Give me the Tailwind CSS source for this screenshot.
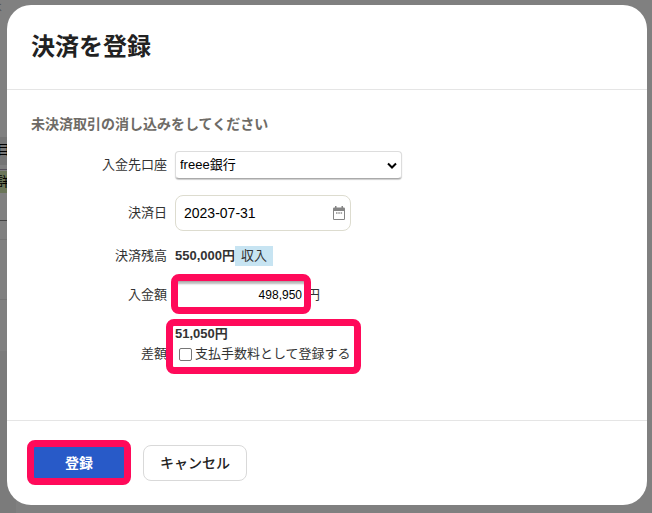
<!DOCTYPE html>
<html lang="ja">
<head>
  <meta charset="UTF-8" />
  <meta name="viewport" content="width=device-width, initial-scale=1.0"/>
  <title>決済を登録</title>
  <script src="https://cdn.jsdelivr.net/npm/@tailwindcss/browser@4"></script>
</head>
<body class="relative min-h-screen overflow-hidden bg-[#808080] font-['Liberation_Sans','Noto_Sans_CJK_JP',sans-serif] text-[13px] text-[#333333]">

  <!-- Page behind the dialog -->
  <div class="absolute inset-y-0 left-0 w-4 overflow-hidden" aria-hidden="true">
    <div class="absolute inset-x-0 top-[137px] h-7 bg-[#757575]"></div>
    <div class="absolute inset-x-0 top-[169px] h-px bg-[#55505a]"></div>
    <div class="absolute inset-x-0 top-[171px] h-[22px] bg-[#6a7558]"></div>
    <div class="absolute inset-x-0 top-[220px] h-px bg-[#444444]"></div>
    <div class="absolute inset-x-0 top-[239px] h-px bg-[#757575]"></div>
    <div class="absolute inset-x-0 top-[299px] h-px bg-[#757575]"></div>
    <div class="absolute inset-x-0 top-[351px] bottom-0 bg-[#7b7b7b]"></div>
    <span class="absolute -left-[10px] top-0 text-xs leading-4 text-[#555555]">は</span>
    <span class="absolute -left-[3px] top-[142px] leading-4 text-black">目</span>
    <span class="absolute -left-[3px] top-[174px] leading-4 text-black">詳</span>
  </div>

  <!-- Dialog -->
  <div class="relative py-[5px] pr-[5px] pl-[7px]">
    <form role="dialog" aria-labelledby="dialog-title" class="rounded-3xl bg-white">
      <header class="border-b border-[#e5e5e5] px-6 pt-[26px] pb-[26px]">
        <h1 id="dialog-title" class="text-2xl leading-8 font-bold text-[#222222]">決済を登録</h1>
      </header>

      <div class="px-6 pt-6 pb-14">
        <h2 class="text-sm leading-5 font-bold text-[#6e6b66]">未決済取引の消し込みをしてください</h2>

        <div class="mt-[17px] grid grid-cols-[136px_1fr] items-center gap-x-2">
          <label for="account" class="text-right">入金先口座</label>
          <div class="relative w-[227px]">
            <select id="account" class="block h-7 w-full appearance-none rounded border border-[#dddddd] border-b-[#aaaaaa] bg-white px-1 text-[13px] text-black shadow-[0_1px_1px_#cccccc]">
              <option>freee銀行</option>
            </select>
            <svg class="pointer-events-none absolute top-[11px] right-1 h-2 w-3" viewBox="0 0 12 8" fill="none" stroke="black" stroke-width="2"><path d="M2 1.5 6 5.5 10 1.5"/></svg>
          </div>

          <label for="date" class="mt-4 text-right">決済日</label>
          <div class="relative mt-4 w-44">
            <input id="date" type="text" value="2023-07-31" class="block h-9 w-full rounded-lg border border-[#dddccf] bg-white px-2 text-sm text-black"/>
            <svg class="pointer-events-none absolute top-[11px] right-[6px] h-[14px] w-3" viewBox="0 0 12 14"><path d="M2 0h1.500v1.500h5V0H10v1.500h.8Q12 1.500 12 2.700v10.100q0 1.200-1.200 1.200H1.200Q0 14 0 12.800V2.700Q0 1.500 1.200 1.500H2zM1 5v8h10V5z" fill="#858585" fill-rule="evenodd"/><path d="M3 6h1.500v2H3zm2.300 0h1.500v2H5.300zm2.300 0h1.500v2H7.600z" fill="#aaaaaa"/></svg>
          </div>

          <span class="mt-3 text-right">決済残高</span>
          <div class="mt-3 flex h-[26px] items-center">
            <span class="font-bold">550,000円</span>
            <span class="bg-[#c7e4f2] px-[6px] leading-5">収入</span>
          </div>

          <label for="amount" class="mt-3 text-right">入金額</label>
          <div class="mt-3 flex h-7 items-center">
            <div class="relative">
              <input id="amount" type="text" value="498,950" class="block h-7 w-[132px] rounded border border-[#aaaaaa] bg-white pr-1 text-right text-xs text-black shadow-[inset_0_2px_2px_#bbbbbb]"/>
              <div class="pointer-events-none absolute -top-[7px] -left-1 h-10 w-[140px] rounded-lg border-7 border-[#ff0a5a]"></div>
            </div>
            <span>円</span>
          </div>

          <span class="mt-[18px] self-end text-right leading-5">差額</span>
          <div class="relative mt-[15px] w-[180px]">
            <div class="leading-5 font-bold">51,050円</div>
            <div class="flex h-5 items-center">
              <input id="fee" type="checkbox" class="mr-[3px] ml-1 size-[13px] shrink-0 appearance-none rounded-xs border border-[#767676] bg-white"/>
              <label for="fee" class="whitespace-nowrap">支払手数料として登録する</label>
            </div>
            <div class="pointer-events-none absolute -top-[5px] -left-[9px] h-[55px] w-[195px] rounded-lg border-7 border-[#ff0a5a]"></div>
          </div>
        </div>
      </div>

      <footer class="flex gap-4 border-t border-[#e5e5e5] p-6">
        <div class="relative">
          <button type="submit" class="block h-9 w-24 rounded-lg bg-[#285ac8] text-sm font-bold text-white">登録</button>
          <div class="pointer-events-none absolute -inset-x-1 -top-[5px] -bottom-1 rounded-lg border-7 border-[#ff0a5a]"></div>
        </div>
        <button type="button" class="h-9 w-[104px] rounded-lg border border-[#d9d9d9] bg-white text-sm font-medium text-[#222222]">キャンセル</button>
      </footer>
    </form>
  </div>

</body>
</html>
